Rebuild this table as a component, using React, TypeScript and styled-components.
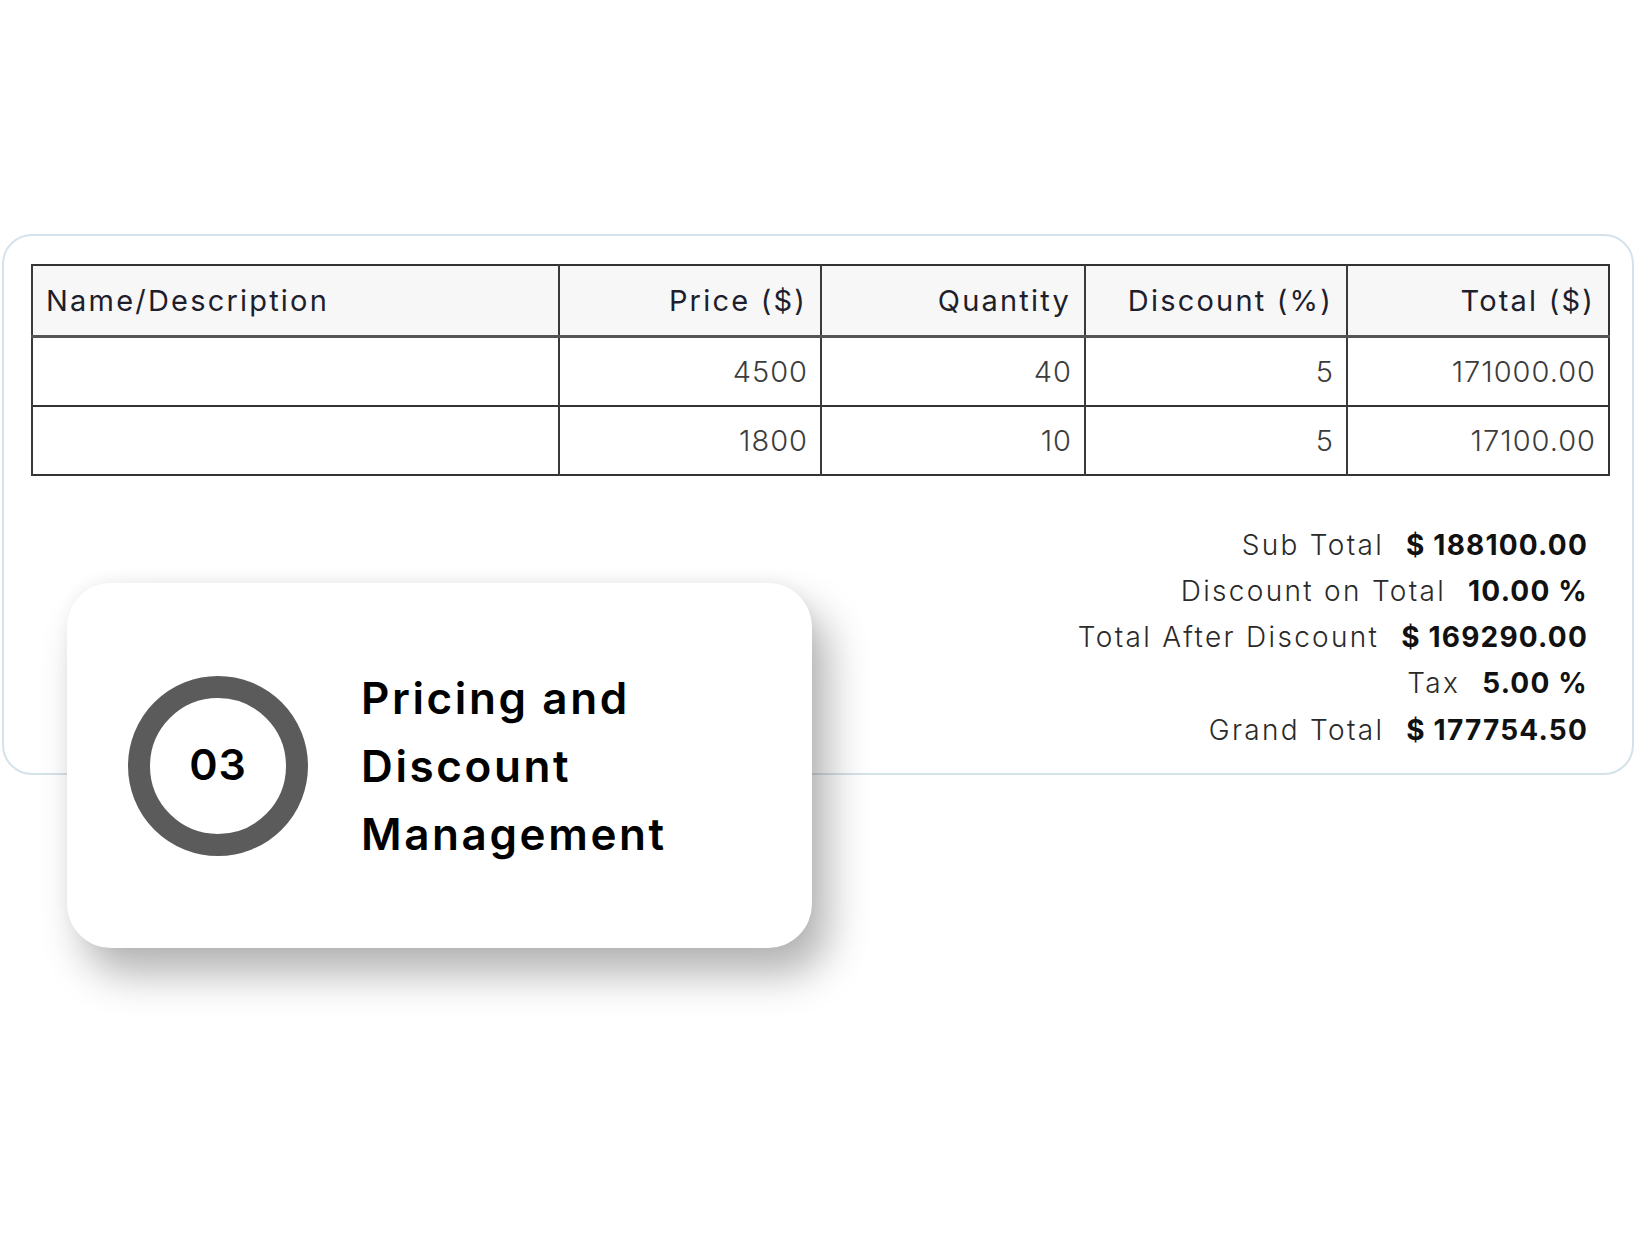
import React from "react";
import styled, { createGlobalStyle } from "styled-components";

const items = [
  { price: "4500", qty: "40", discount: "5", total: "171000.00" },
  { price: "1800", qty: "10", discount: "5", total: "17100.00" },
];

const totals = [
  { label: "Sub Total", value: "$ 188100.00" },
  { label: "Discount on Total", value: "10.00 %" },
  { label: "Total After Discount", value: "$ 169290.00" },
  { label: "Tax", value: "5.00 %" },
  { label: "Grand Total", value: "$ 177754.50" },
];

export default function App() {
  return (
    <>
      <GlobalStyle />
      <Page>
        <InvoiceCard>
          <ItemTable>
            <colgroup>
              <col style={{ width: 527 }} />
              <col style={{ width: 262 }} />
              <col style={{ width: 264 }} />
              <col style={{ width: 262 }} />
              <col style={{ width: 262 }} />
            </colgroup>
            <thead>
              <tr>
                <HeadCell $align="left">Name/Description</HeadCell>
                <HeadCell>Price ($)</HeadCell>
                <HeadCell>Quantity</HeadCell>
                <HeadCell>Discount (%)</HeadCell>
                <HeadCell>Total ($)</HeadCell>
              </tr>
            </thead>
            <tbody>
              {items.map((item, i) => (
                <BodyRow key={i}>
                  <Cell />
                  <Cell>{item.price}</Cell>
                  <Cell>{item.qty}</Cell>
                  <Cell>{item.discount}</Cell>
                  <Cell>{item.total}</Cell>
                </BodyRow>
              ))}
            </tbody>
          </ItemTable>

          <Summary>
            {totals.map((t) => (
              <SummaryRow key={t.label}>
                <SummaryLabel>{t.label}</SummaryLabel>
                <SummaryValue>{t.value}</SummaryValue>
              </SummaryRow>
            ))}
          </Summary>
        </InvoiceCard>

        <FeatureCard>
          <StepRing>03</StepRing>
          <FeatureTitle>
            Pricing and
            <br />
            Discount
            <br />
            Management
          </FeatureTitle>
        </FeatureCard>
      </Page>
    </>
  );
}

const GlobalStyle = createGlobalStyle`
  html, body {
    margin: 0;
    padding: 0;
    background: #ffffff;
  }
  body {
    font-family: Inter, "Open Sans", sans-serif;
  }
`;

const Page = styled.div`
  position: relative;
  width: 1638px;
  height: 1251px;
  padding-top: 234px;
  box-sizing: border-box;
  overflow: hidden;
`;

const InvoiceCard = styled.div`
  margin-left: 2px;
  width: 1632px;
  height: 541px;
  box-sizing: border-box;
  border: 2px solid #d6e2ea;
  border-radius: 30px;
  padding: 28px 0 0 27px;
`;

const ItemTable = styled.table`
  width: 1577px;
  table-layout: fixed;
  border-collapse: collapse;
  border: 2px solid #333;
`;

const HeadCell = styled.th<{ $align?: "left" | "right" }>`
  height: 69px;
  padding: 0 13px;
  background: #f7f7f7;
  border-left: 2px solid #3a3a3a;
  border-bottom: 3px solid #555;
  text-align: ${(p) => p.$align || "right"};
  font-size: 29px;
  font-weight: 400;
  letter-spacing: 2.2px;
  color: #1e1e2c;
  white-space: nowrap;
`;

const BodyRow = styled.tr`
  height: 69px;
`;

const Cell = styled.td`
  padding: 0 12px;
  border-left: 2px solid #3a3a3a;
  border-top: 2px solid #333;
  text-align: right;
  font-size: 29px;
  font-weight: 300;
  letter-spacing: 1px;
  color: #3c3c3c;
`;

const Summary = styled.div`
  display: flex;
  flex-direction: column;
  align-items: flex-end;
  width: 1557px;
  margin-top: 46px;
`;

const SummaryRow = styled.div`
  display: flex;
  align-items: baseline;
  gap: 22px;
  line-height: 46.3px;
  font-size: 28px;
`;

const SummaryLabel = styled.span`
  font-weight: 300;
  letter-spacing: 2.3px;
  color: #2a2a2a;
`;

const SummaryValue = styled.span`
  font-weight: 700;
  letter-spacing: 1.2px;
  color: #111;
`;

const FeatureCard = styled.div`
  position: absolute;
  left: 67px;
  top: 583px;
  width: 745px;
  height: 365px;
  box-sizing: border-box;
  padding-left: 61px;
  display: flex;
  align-items: center;
  gap: 53px;
  background: #ffffff;
  border-radius: 44px;
  box-shadow: 16px 26px 42px rgba(0, 0, 0, 0.3), 0 -4px 14px rgba(0, 0, 0, 0.04);
`;

const StepRing = styled.div`
  flex: 0 0 auto;
  width: 180px;
  height: 180px;
  box-sizing: border-box;
  border: 22px solid #5b5b5b;
  border-radius: 50%;
  display: flex;
  align-items: center;
  justify-content: center;
  padding-bottom: 4px;
  font-size: 43px;
  font-weight: 600;
  letter-spacing: 1px;
  color: #000;
`;

const FeatureTitle = styled.h2`
  margin: 0;
  font-size: 44px;
  font-weight: 600;
  line-height: 68px;
  letter-spacing: 2.6px;
  color: #000;
`;
